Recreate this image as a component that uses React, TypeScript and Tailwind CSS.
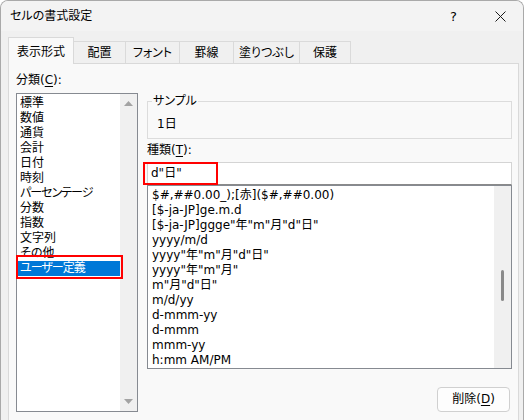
import React from "react";

const cats = ["標準", "数値", "通貨", "会計", "日付", "時刻", "パーセンテージ", "分数", "指数", "文字列", "その他", "ユーザー定義"];
const fmts = [
  '$#,##0.00_);[赤]($#,##0.00)',
  '[$-ja-JP]ge.m.d',
  '[$-ja-JP]ggge"年"m"月"d"日"',
  "yyyy/m/d",
  'yyyy"年"m"月"d"日"',
  'yyyy"年"m"月"',
  'm"月"d"日"',
  "m/d/yy",
  "d-mmm-yy",
  "d-mmm",
  "mmm-yy",
  "h:mm AM/PM",
];
const tabs = [
  { t: "配置", w: "w-[52px]" },
  { t: "フォント", w: "w-[54px]" },
  { t: "罫線", w: "w-[54px]" },
  { t: "塗りつぶし", w: "w-[66px]" },
  { t: "保護", w: "w-[51px]" },
];
const kanaHeavy = ["パーセンテージ", "ユーザー定義"];

function Tri({ up }: { up?: boolean }) {
  return (
    <svg width="9" height="5" viewBox="0 0 9 5">
      {up ? <path d="M0 5 L4.5 0 L9 5 Z" fill="#a3a3a3" /> : <path d="M0 0 L4.5 5 L9 0 Z" fill="#a3a3a3" />}
    </svg>
  );
}

export default function App() {
  return (
    <div
      className="w-[524px] h-[420px] overflow-hidden bg-[#f0f0f0] rounded-t-[8px] border-t border-l border-r border-[#a9a9a9] text-[12px] text-black [font-feature-settings:'palt'] flex flex-col"
      style={{ fontFamily: '"DejaVu Sans", "Noto Sans CJK JP", sans-serif' }}
    >
      {/* title bar */}
      <div className="h-[30px] shrink-0 bg-[#f3f3f3] flex items-center">
        <div className="pl-[9px] leading-[15px]">セルの書式設定</div>
        <div className="flex-1" />
        <div className="text-[13px] leading-[15px] mr-[38px]">?</div>
        <svg width="11" height="11" viewBox="0 0 11 11" className="mr-[17px]">
          <path d="M0.5 0.5 L10.5 10.5 M10.5 0.5 L0.5 10.5" stroke="#1a1a1a" strokeWidth="1" />
        </svg>
      </div>

      {/* tabs */}
      <div className="h-[32px] shrink-0 flex items-end pl-[7px]">
        <div className="relative z-10 w-[66px] h-[27px] -mb-px bg-[#f9f9f9] border-t border-l border-r border-[#d9d9d9] flex items-center justify-center pt-[3px] leading-[15px]">
          表示形式
        </div>
        {tabs.map((tb) => (
          <div
            key={tb.t}
            className={`${tb.w} h-[22px] border-t border-r border-[#dadada] bg-[#f0f0f0] flex items-center justify-center pt-[2px] leading-[15px]`}
          >
            {tb.t}
          </div>
        ))}
      </div>

      {/* panel */}
      <div className="ml-[7px] w-[511px] h-[400px] shrink-0 border border-[#d9d9d9] bg-[#f9f9f9] flex pl-[7px]">
        {/* left column */}
        <div className="w-[122px] flex flex-col">
          <div className="mt-[9px] leading-[15px]">
            分類(<span className="underline underline-offset-2">C</span>):
          </div>
          <div className="relative mt-[5px] h-[319px] border border-[#868a91] bg-white flex">
            <div className="flex-1 pt-[2px]">
              {cats.map((c) =>
                c === "ユーザー定義" ? (
                  <div key={c} className="ml-px bg-[#0078d7] text-white leading-[15px] pl-[2px] tracking-[-1px]">
                    {c}
                  </div>
                ) : (
                  <div key={c} className={`leading-[15px] pl-[3px] ${kanaHeavy.includes(c) ? "tracking-[-1px]" : ""}`}>
                    {c}
                  </div>
                )
              )}
            </div>
            <div className="w-[17px] bg-[#f0f0f0] flex flex-col items-center justify-between pt-[7px] pb-[7px]">
              <Tri up />
              <Tri />
            </div>
            <div className="absolute left-[-1px] top-[161px] w-[107px] h-[24px] border-2 border-[#ff0000]" />
          </div>
        </div>

        {/* right column */}
        <div className="ml-[9px] w-[365px] flex flex-col">
          <fieldset className="mt-[30px] border border-[#dcdcdc]">
            <legend className="ml-[4px] px-[1px] leading-[15px]">サンプル</legend>
            <div className="pl-[9px] pt-[8px] pb-[6px] leading-[15px]">1日</div>
          </fieldset>
          <div className="mt-[4px] leading-[15px]">
            種類(<span className="underline underline-offset-2">T</span>):
          </div>
          <div className="relative mt-[4px] h-[23px] bg-white border border-[#d4d4d4] border-b-[#8a8a8a] flex items-center pl-[3px] leading-[15px]">
            d"日"
            <div className="absolute left-[-5px] top-[-1px] w-[75px] h-[23px] border-2 border-[#ff0000]" />
          </div>
          <div className="h-[184px] border border-[#868a91] bg-white flex">
            <div className="flex-1 pt-[2px] pl-[4px]">
              {fmts.map((f) => (
                <div key={f} className="leading-[15px] whitespace-nowrap">
                  {f}
                </div>
              ))}
            </div>
            <div className="w-[17px] bg-[#f0f0f0] flex flex-col items-center">
              <div className="h-[84px]" />
              <div className="w-[3px] h-[31px] rounded-full bg-[#8a8a8a]" />
            </div>
          </div>
          <div className="flex justify-end mt-[18px] mr-[2px]">
            <button className="w-[73px] h-[25px] rounded-[4px] border border-[#d0d0d0] bg-[#fdfdfd] flex items-center justify-center leading-[15px]">
              削除(<span className="underline underline-offset-2">D</span>)
            </button>
          </div>
        </div>
      </div>
    </div>
  );
}
